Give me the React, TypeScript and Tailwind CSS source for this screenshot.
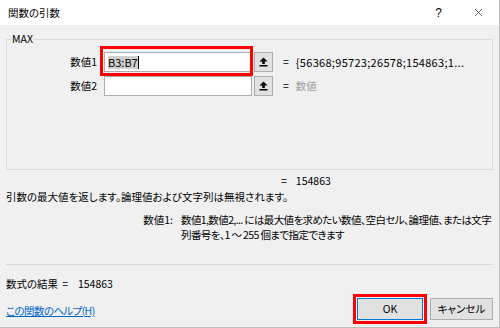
import { X } from "lucide-react";

const font = "[font-family:'Noto_Sans_CJK_JP',sans-serif] [font-feature-settings:'palt']";

function RefButton() {
  return (
    <button
      type="button"
      className="ml-[2px] flex h-[20px] w-[19px] items-center justify-center border border-[#adadad] bg-[#e1e1e1]"
    >
      <svg width="9" height="10" viewBox="0 0 9 10">
        <path d="M4.5 0.5 L8.5 4.5 H5.8 V7 H3.2 V4.5 H0.5 Z" fill="#000" />
        <rect x="0.5" y="8" width="8" height="1.5" fill="#000" />
      </svg>
    </button>
  );
}

function ArgRow({
  label,
  value,
  result,
  resultMuted,
  highlight,
}: {
  label: string;
  value: string;
  result: string;
  resultMuted?: boolean;
  highlight?: boolean;
}) {
  return (
    <div className="flex h-[20px] items-center">
      <div className="w-[90px] shrink-0 text-right">{label}</div>
      <div className="relative ml-[7px] h-[20px] w-[148px] shrink-0">
        <div className="flex h-full items-center border border-[#adadad] bg-white px-[3px]">
          {value && <span className="bg-[#cfcfcf] text-[11px] leading-[13px]">{value}</span>}
          {value && <span className="h-[13px] w-px bg-black" />}
        </div>
        {highlight && (
          <div className="absolute -left-[4px] -top-[6px] h-[30px] w-[153px] border-[3px] border-[#ff0000]" />
        )}
      </div>
      <RefButton />
      <span className="ml-[10px]">=</span>
      <span
        className={
          "ml-[7px] whitespace-nowrap " + (resultMuted ? "text-[#a0a0a0]" : "text-[11px] tracking-[0.3px]")
        }
      >
        {result}
      </span>
    </div>
  );
}

export default function App() {
  return (
    <div className={`${font} flex h-[328px] w-[500px] flex-col border-r border-b border-[#bdbdbd] bg-[#f0f0f0] text-[10.5px] leading-[14px] text-black`}>
      {/* title bar */}
      <div className="flex h-[25px] shrink-0 items-center bg-white pl-[8px] pr-[14px]">
        <span>関数の引数</span>
        <span className="ml-auto mr-[2px] text-[12px] [font-family:'Liberation_Sans',sans-serif]">?</span>
        <X size={13} strokeWidth={1.1} className="ml-[28px]" />
      </div>

      <div className="flex flex-col px-[6px]">
        <fieldset className="mt-[7px] w-[487px] border border-[#dcdcdc] px-0 pb-[73px] pt-[6px]">
          <legend className="ml-[4px] px-[1px] leading-[14px]">MAX</legend>
          <div className="flex flex-col gap-[4px]">
            <ArgRow label="数値1" value="B3:B7" result="{56368;95723;26578;154863;1..." highlight />
            <ArgRow label="数値2" value="" result="数値" resultMuted />
          </div>
        </fieldset>

        <div className="mt-[4px] flex pl-[275px]">
          <span>=</span>
          <span className="ml-[9px]">154863</span>
        </div>

        <div className="mt-[2px]">引数の最大値を返します。論理値および文字列は無視されます。</div>

        <div className="mt-[8px] flex leading-[15px]">
          <div className="w-[167px] shrink-0 text-right">数値1:</div>
          <div className="ml-[8px] flex flex-col tracking-[-0.6px]">
            <span className="whitespace-nowrap">数値1,数値2,... には最大値を求めたい数値、空白セル、論理値、または文字</span>
            <span className="whitespace-nowrap">列番号を、1 ～ 255 個まで指定できます</span>
          </div>
        </div>

        <div className="mt-[22px] h-px w-[487px] bg-[#d9d9d9]" />

        <div className="mt-[12px] flex">
          <span>数式の結果</span>
          <span className="ml-[4px]">=</span>
          <span className="ml-[10px]">154863</span>
        </div>

        <div className="mt-[7px] flex w-[487px] items-center">
          <a href="#" className="mt-[3px] tracking-[-0.6px] text-[#0066cc] underline">
            この関数のヘルプ(H)
          </a>
          <div className="relative ml-auto">
            <button
              type="button"
              className="flex h-[22px] w-[66px] items-center justify-center border border-[#0078d7] bg-[#e1e1e1]"
            >
              OK
            </button>
            <div className="absolute -left-[4px] -top-[4px] h-[30px] w-[74px] border-[3px] border-[#ff0000]" />
          </div>
          <button
            type="button"
            className="ml-[7px] flex h-[22px] w-[63px] items-center justify-center border border-[#adadad] bg-[#e1e1e1]"
          >
            キャンセル
          </button>
        </div>
      </div>
    </div>
  );
}
